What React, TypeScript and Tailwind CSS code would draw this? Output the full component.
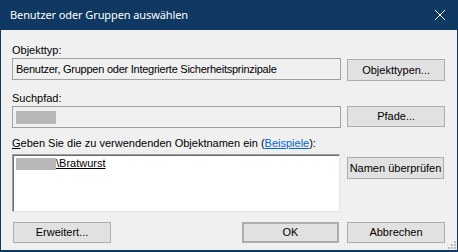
import React from "react";

const Btn = ({ children, className = "" }: { children: React.ReactNode; className?: string }) => (
  <div
    className={
      "flex items-center justify-center bg-[#e1e1e1] border border-[#adadad] text-[11px] leading-[13px] text-black " +
      className
    }
  >
    {children}
  </div>
);

const Blur = ({ className = "" }: { className?: string }) => (
  <div className={"bg-[#b8b8b8] blur-[0.6px] " + className} />
);

export default function App() {
  return (
    <div
      className="w-[458px] h-[252px] bg-[#0f3962] flex flex-col px-px pb-[2px]"
      style={{ fontFamily: '"Liberation Sans", Arial, sans-serif' }}
    >
      <div className="h-[30px] flex items-center justify-between pl-[9px] pr-[10px] shrink-0">
        <span
          className="text-white text-[11px] tracking-[-0.1px]"
          style={{ fontFamily: '"Noto Sans", "Open Sans", sans-serif' }}
        >
          Benutzer oder Gruppen auswählen
        </span>
        <svg width="12" height="12" viewBox="0 0 12 12" className="mr-[1px]">
          <path d="M1 1 L11 11 M11 1 L1 11" stroke="white" strokeWidth="1" />
        </svg>
      </div>
      <div className="flex-1 bg-[#f0f0f0] flex flex-col pl-[11px] pr-[12px] relative">
        <div className="mt-[14px] h-[13px] text-[11px] leading-[13px] text-black">Objekttyp:</div>
        <div className="mt-px flex items-start gap-[6px]">
          <div className="w-[330px] h-[22px] border border-[#a0a0a0] bg-[#f0f0f0] flex items-center px-[3px] text-[11px] text-black tracking-[-0.25px]">
            Benutzer, Gruppen oder Integrierte Sicherheitsprinzipale
          </div>
          <Btn className="w-[98px] h-[22px] mt-[1px]">Objekttypen...</Btn>
        </div>
        <div className="mt-[11px] h-[13px] text-[11px] leading-[13px] text-black">Suchpfad:</div>
        <div className="mt-px flex items-start gap-[6px]">
          <div className="w-[330px] h-[22px] border border-[#a0a0a0] bg-[#f0f0f0] flex items-center px-[3px]">
            <Blur className="w-[40px] h-[13px]" />
          </div>
          <Btn className="w-[98px] h-[21px]">Pfade...</Btn>
        </div>
        <div className="mt-[9px] h-[13px] text-[11px] leading-[13px] text-black">
          <span className="underline">G</span>eben Sie die zu verwendenden Objektnamen ein (
          <span className="text-[#0066cc] underline">Beispiele</span>):
        </div>
        <div className="mt-[4px] flex items-start gap-[7px]">
          <div className="w-[328px] h-[58px] bg-white border-t border-l border-[#a0a0a0] border-r border-b border-r-[#e3e3e3] border-b-[#e3e3e3] shadow-[inset_1px_1px_0_#696969] pl-[3px] pt-[2px]">
            <div className="flex items-center h-[13px]">
              <Blur className="w-[40px] h-[12px]" />
              <span className="text-[11px] leading-[13px] text-black underline">\Bratwurst</span>
            </div>
          </div>
          <Btn className="w-[97px] h-[22px] mt-[3px]">Namen überprüfen</Btn>
        </div>
        <div className="mt-[10px] flex items-start">
          <Btn className="w-[98px] h-[21px] ml-px">Erweitert...</Btn>
          <div className="flex-1" />
          <Btn className="w-[97px] h-[21px] border-2 border-[#0078d7]">OK</Btn>
          <Btn className="w-[98px] h-[21px] ml-[8px]">Abbrechen</Btn>
        </div>
        <svg width="8" height="8" viewBox="0 0 8 8" className="absolute right-[1px] bottom-[1px]">
          <rect x="6" y="0" width="2" height="2" fill="#bcbcbc" />
          <rect x="3" y="3" width="2" height="2" fill="#bcbcbc" />
          <rect x="6" y="3" width="2" height="2" fill="#bcbcbc" />
          <rect x="0" y="6" width="2" height="2" fill="#bcbcbc" />
          <rect x="3" y="6" width="2" height="2" fill="#bcbcbc" />
          <rect x="6" y="6" width="2" height="2" fill="#bcbcbc" />
        </svg>
      </div>
    </div>
  );
}
